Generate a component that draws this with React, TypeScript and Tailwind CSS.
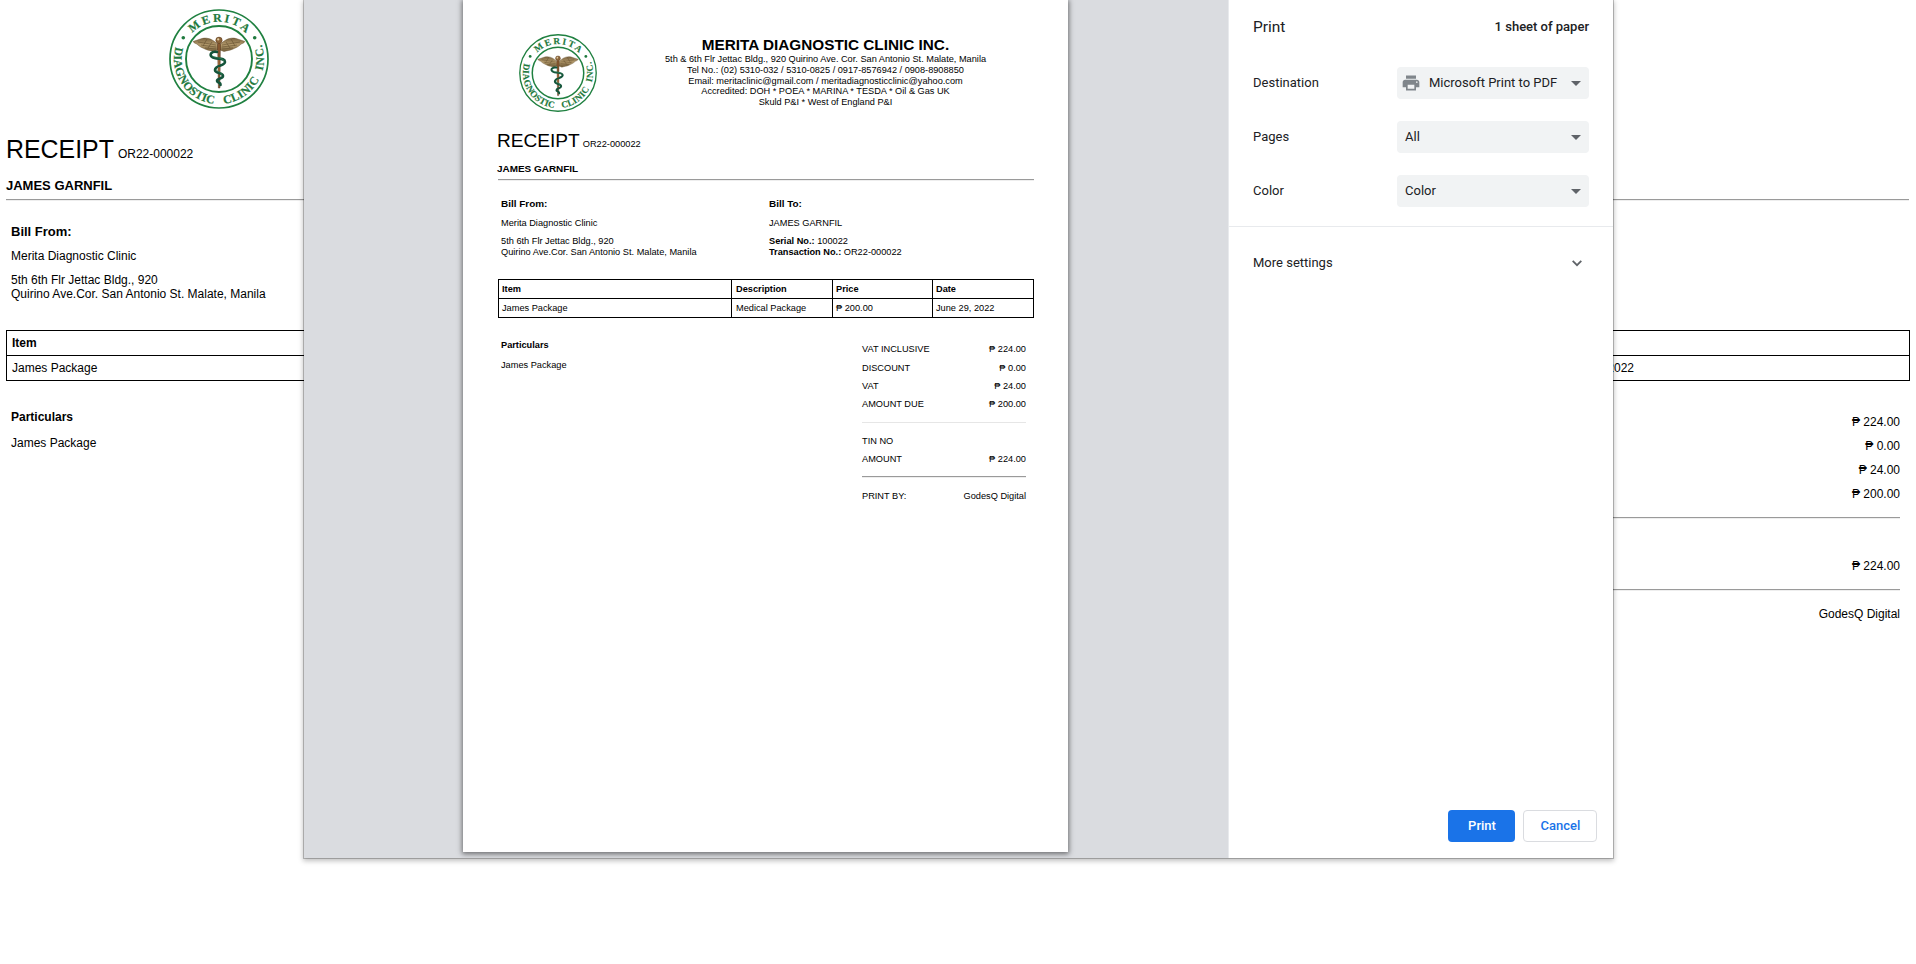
import React from "react";

const ARIAL = "font-['Liberation_Sans',Arial,sans-serif]";
const totals = [
  ["VAT INCLUSIVE", "₱ 224.00"],
  ["DISCOUNT", "₱ 0.00"],
  ["VAT", "₱ 24.00"],
  ["AMOUNT DUE", "₱ 200.00"],
];

function Logo({ id, className }: { id: string; className: string }) {
  return (
    <svg viewBox="0 0 100 100" className={className}>
      <defs>
        <path id={`${id}-top`} d="M 12.8 50 A 37.2 37.2 0 0 1 87.2 50" />
        <path id={`${id}-bottom`} d="M 13.14 24.19 A 45 45 0 1 0 86.86 24.19" />
        <linearGradient id={`${id}-gold`} x1="0" y1="0" x2="0" y2="1">
          <stop offset="0" stopColor="#7a6340" />
          <stop offset="0.5" stopColor="#b39a6c" />
          <stop offset="1" stopColor="#75603c" />
        </linearGradient>
      </defs>
      <circle cx="50" cy="50" r="49" fill="#fff" stroke="#1f8040" strokeWidth="1.7" />
      <circle cx="50" cy="50" r="33" fill="none" stroke="#1f8040" strokeWidth="1.9" />
      <g fill="#1f7a3e" stroke="#1f7a3e" strokeWidth="0.2" fontSize="11.8" className="font-['Liberation_Serif',serif] font-bold">
        <text textLength="60" lengthAdjust="spacing">
          <textPath href={`#${id}-top`} startOffset="28.5">MERITA</textPath>
        </text>
        <text textLength="78" lengthAdjust="spacing">
          <textPath href={`#${id}-bottom`} startOffset="15">DIAGNOSTIC</textPath>
        </text>
        <text textLength="44.5" lengthAdjust="spacing">
          <textPath href={`#${id}-bottom`} startOffset="103">CLINIC</textPath>
        </text>
        <text textLength="27" lengthAdjust="spacing">
          <textPath href={`#${id}-bottom`} startOffset="156.5">INC.</textPath>
        </text>
      </g>
      <circle cx="14.3" cy="28.7" r="1.8" fill="#1f7a3e" />
      <circle cx="85.7" cy="28.7" r="1.8" fill="#1f7a3e" />
      <path
        d="M49 36 C45 31 39 28 33 29.5 C30 30.5 27 31.5 24 32.5 C25 34.5 28 34.5 29 36 C31 38 34 39 36 40 C39 41.5 42 41.5 45 42.5 L49 41 Z"
        fill={`url(#${id}-gold)`} stroke="#66502c" strokeWidth="0.5"
      />
      <path
        d="M51 36 C55 31 61 28 67 29.5 C70 30.5 73 31.5 76 32.5 C75 34.5 72 34.5 71 36 C69 38 66 39 64 40 C61 41.5 58 41.5 55 42.5 L51 41 Z"
        fill={`url(#${id}-gold)`} stroke="#66502c" strokeWidth="0.5"
      />
      <path
        d="M29 33 L47 36 M32 36 L47 38 M36 39 L47 40 M38 30 L34 37 M43 33 L39 39 M71 33 L53 36 M68 36 L53 38 M64 39 L53 40 M62 30 L66 37 M57 33 L61 39"
        stroke="#5a4628" strokeWidth="0.5" fill="none"
      />
      <path d="M48.6 34 L51.4 34 L50.9 79 L49.4 79 Z" fill="#8a5a32" stroke="#4c2f18" strokeWidth="0.5" />
      <path
        d="M48 43 C42 42 40 46 43 48 C47 51 56 48 56 53 C56 57 46 56 46 61 C46 65 54 63 54 67 C54 70 48 69 48 72 C48 74 52 73 51.5 76"
        fill="none" stroke="#14543a" strokeWidth="2.6" strokeLinecap="round"
      />
      <path d="M43 46.5 C45 49 54 48.5 55 52 M47 60 C48 62.5 52 62.5 53 66" fill="none" stroke="#3c9160" strokeWidth="0.6" />
      <path d="M49.7 51 L49.7 56 M50 58 L50 62" stroke="#9a6639" strokeWidth="1.6" />
      <circle cx="50" cy="31.3" r="3.2" fill="#8a6238" stroke="#5d3f20" strokeWidth="0.5" />
      <circle cx="49.2" cy="30.4" r="1.1" fill="#e2cda0" />
    </svg>
  );
}

function PageBehind() {
  return (
    <div className="flex h-[964px] w-[1916px] flex-col pl-[6px] pr-[6px] pt-[9px] text-[12px] leading-[14px] text-black">
      <Logo id="seal-a" className="ml-[163px] h-[100px] w-[100px]" />
      <div className="mt-[26px] flex h-[28px] items-baseline gap-[4px]">
        <span className="text-[24.9px] leading-[28px]">RECEIPT</span>
        <span>OR22-000022</span>
      </div>
      <div className="mt-[15px] text-[13px] font-bold leading-[15px]">JAMES GARNFIL</div>
      <div className="mr-px mt-[6px] h-[2px] border-b border-t border-b-[#eeeeee] border-t-[#9a9a9a]" />
      <div className="mt-[23px] pl-[5px]">
        <div className="text-[13px] font-bold leading-[15px]">Bill From:</div>
        <div className="mt-[10px]">Merita Diagnostic Clinic</div>
        <div className="mt-[10px]">5th 6th Flr Jettac Bldg., 920</div>
        <div>Quirino Ave.Cor. San Antonio St. Malate, Manila</div>
      </div>
      <div className="mt-[29px] w-[1904px] border border-black">
        <div className="h-[24px] pl-[5px] pt-[5px] font-bold">Item</div>
        <div className="flex h-[25px] justify-between border-t border-black pl-[5px] pr-[275px] pt-[5px]">
          <span>James Package</span>
          <span>June 29, 2022</span>
        </div>
      </div>
      <div className="mt-[29px] flex justify-between pl-[5px] pr-[10px]">
        <div>
          <div className="font-bold">Particulars</div>
          <div className="mt-[12px]">James Package</div>
        </div>
        <div className="mt-[5px] w-[640px]">
          {totals.map(([label, value]) => (
            <div key={label} className="mb-[10px] flex justify-between">
              <span>{label}</span>
              <span>{value}</span>
            </div>
          ))}
          <div className="mt-[16px] h-[2px] border-b border-t border-b-[#eeeeee] border-t-[#9a9a9a]" />
          <div className="mt-[16px]">TIN NO</div>
          <div className="mt-[10px] flex justify-between">
            <span>AMOUNT</span>
            <span>₱ 224.00</span>
          </div>
          <div className="mt-[16px] h-[2px] border-b border-t border-b-[#eeeeee] border-t-[#9a9a9a]" />
          <div className="mt-[16px] flex justify-between">
            <span>PRINT BY:</span>
            <span>GodesQ Digital</span>
          </div>
        </div>
      </div>
    </div>
  );
}

function Paper() {
  return (
    <div className="h-[852px] w-[605px] bg-white pl-[34px] pr-[35px] text-[9.22px] leading-[11px] text-black shadow-[0_1px_5px_1px_rgba(0,0,0,0.5)]">
      <div className="flex h-[112px]">
        <Logo id="seal-b" className="ml-[22px] mt-[34px] h-[78px] w-[78px] shrink-0" />
        <div className="ml-[28px] mt-[36px] w-[401px] shrink-0 text-center text-[9.2px]">
          <div className="mb-px text-[15.3px] font-bold leading-[17px]">MERITA DIAGNOSTIC CLINIC INC.</div>
          <div>5th &amp; 6th Flr Jettac Bldg., 920 Quirino Ave. Cor. San Antonio St. Malate, Manila</div>
          <div>Tel No.: (02) 5310-032 / 5310-0825 / 0917-8576942 / 0908-8908850</div>
          <div className="leading-[10px]">Email: meritaclinic@gmail.com / meritadiagnosticclinic@yahoo.com</div>
          <div className="leading-[10px]">Accredited: DOH * POEA * MARINA * TESDA * Oil &amp; Gas UK</div>
          <div className="leading-[12px]">Skuld P&amp;I * West of England P&amp;I</div>
        </div>
      </div>
      <div className="mt-[18px] flex h-[22px] items-baseline gap-[3px]">
        <span className="text-[19.1px] leading-[22px]">RECEIPT</span>
        <span>OR22-000022</span>
      </div>
      <div className="mt-[11px] text-[9.95px] font-bold leading-[11px]">JAMES GARNFIL</div>
      <div className="ml-px mt-[5px] h-[2px] w-[536px] border-b border-t border-b-[#eeeeee] border-t-[#9a9a9a]" />
      <div className="mt-[17px] flex pl-[4px]">
        <div className="w-[268px]">
          <div className="text-[9.95px] font-bold leading-[11px]">Bill From:</div>
          <div className="mt-[9px]">Merita Diagnostic Clinic</div>
          <div className="mt-[7px]">5th 6th Flr Jettac Bldg., 920</div>
          <div>Quirino Ave.Cor. San Antonio St. Malate, Manila</div>
        </div>
        <div>
          <div className="text-[9.95px] font-bold leading-[11px]">Bill To:</div>
          <div className="mt-[9px]">JAMES GARNFIL</div>
          <div className="mt-[7px]"><b>Serial No.:</b> 100022</div>
          <div><b>Transaction No.:</b> OR22-000022</div>
        </div>
      </div>
      <div className="ml-px mt-[21px] grid w-[536px] grid-cols-[233px_101px_100px_100px] border border-black [&>div]:h-[19px] [&>div]:pl-[3px] [&>div]:pt-[4px]">
        <div className="border-b border-r border-black font-bold">Item</div>
        <div className="!pl-[4px] border-b border-r border-black font-bold">Description</div>
        <div className="border-b border-r border-black font-bold">Price</div>
        <div className="border-b border-black font-bold">Date</div>
        <div className="!h-[18px] border-r border-black">James Package</div>
        <div className="!h-[18px] !pl-[4px] border-r border-black">Medical Package</div>
        <div className="!h-[18px] border-r border-black">₱ 200.00</div>
        <div className="!h-[18px]">June 29, 2022</div>
      </div>
      <div className="mt-[22px] flex justify-between pl-[4px] pr-[7px]">
        <div>
          <div className="font-bold">Particulars</div>
          <div className="mt-[9px]">James Package</div>
        </div>
        <div className="mt-[4px] w-[164px]">
          {totals.map(([label, value]) => (
            <div key={label} className="mb-[7px] flex justify-between first:mb-[8px]">
              <span>{label}</span>
              <span>{value}</span>
            </div>
          ))}
          <div className="mt-[12px] h-px bg-[#e6e6e6]" />
          <div className="mt-[13px]">TIN NO</div>
          <div className="mt-[7px] flex justify-between">
            <span>AMOUNT</span>
            <span>₱ 224.00</span>
          </div>
          <div className="mt-[11px] h-[2px] border-b border-t border-b-[#eeeeee] border-t-[#9a9a9a]" />
          <div className="mt-[13px] flex justify-between">
            <span>PRINT BY:</span>
            <span>GodesQ Digital</span>
          </div>
        </div>
      </div>
    </div>
  );
}

function Setting({ label, value, icon }: { label: string; value: string; icon?: boolean }) {
  return (
    <div className="flex h-[54px] items-center justify-between pl-[24px] pr-[24px]">
      <span>{label}</span>
      <div className="flex h-[32px] w-[192px] items-center rounded-[4px] bg-[#f1f3f4] pl-[8px] pr-[8px]">
        {icon && (
          <svg viewBox="0 0 24 24" className="-ml-[4px] mr-[8px] h-[20px] w-[20px]" fill="#80868b">
            <path d="M19 8H5c-1.66 0-3 1.34-3 3v6h4v4h12v-4h4v-6c0-1.66-1.34-3-3-3zm-3 11H8v-5h8v5zm3-7c-.55 0-1-.45-1-1s.45-1 1-1 1 .45 1 1-.45 1-1 1zm-1-9H6v4h12V3z" />
          </svg>
        )}
        <span className="flex-1">{value}</span>
        <svg viewBox="0 0 10 5" className="h-[5px] w-[10px]"><path d="M0 0h10L5 5z" fill="#5f6368" /></svg>
      </div>
    </div>
  );
}

export default function App() {
  return (
    <div className={`relative h-[964px] w-[1916px] overflow-hidden bg-white ${ARIAL}`}>
      <PageBehind />
      <div className="absolute left-[304px] top-0 flex h-[858px] w-[1309px] bg-white shadow-[0_0_0_1px_rgba(0,0,0,0.22),0_2px_5px_1px_rgba(0,0,0,0.25)]">
        <div className="h-full w-[924px] overflow-hidden bg-[#dadce0] pl-[159px]">
          <Paper />
        </div>
        <div className="flex w-[385px] flex-col border-l border-[#e8eaed] font-[Roboto,sans-serif] text-[13px] leading-[20px] text-[#202124]">
          <div className="flex h-[56px] items-center justify-between px-[24px] pb-[3px]">
            <span className="text-[15.5px]">Print</span>
            <span className="font-medium">1 sheet of paper</span>
          </div>
          <Setting label="Destination" value="Microsoft Print to PDF" icon />
          <Setting label="Pages" value="All" />
          <Setting label="Color" value="Color" />
          <div className="mt-[8px] h-px bg-[#e8eaed]" />
          <div className="mt-[26px] flex items-center justify-between pl-[24px] pr-[31px]">
            <span>More settings</span>
            <svg viewBox="0 0 10 7" className="h-[7px] w-[10px]" fill="none" stroke="#5f6368" strokeWidth="1.8"><path d="M.7 .9 L5 5.2 L9.3 .9" /></svg>
          </div>
          <div className="mb-[16px] mr-[16px] mt-auto flex justify-end gap-[8px] font-medium">
            <button className="h-[32px] w-[67px] rounded-[4px] bg-[#1a73e8] pl-px text-white">Print</button>
            <button className="h-[32px] w-[74px] rounded-[4px] border border-[#dadce0] pl-px text-[#1a73e8]">Cancel</button>
          </div>
        </div>
      </div>
    </div>
  );
}
